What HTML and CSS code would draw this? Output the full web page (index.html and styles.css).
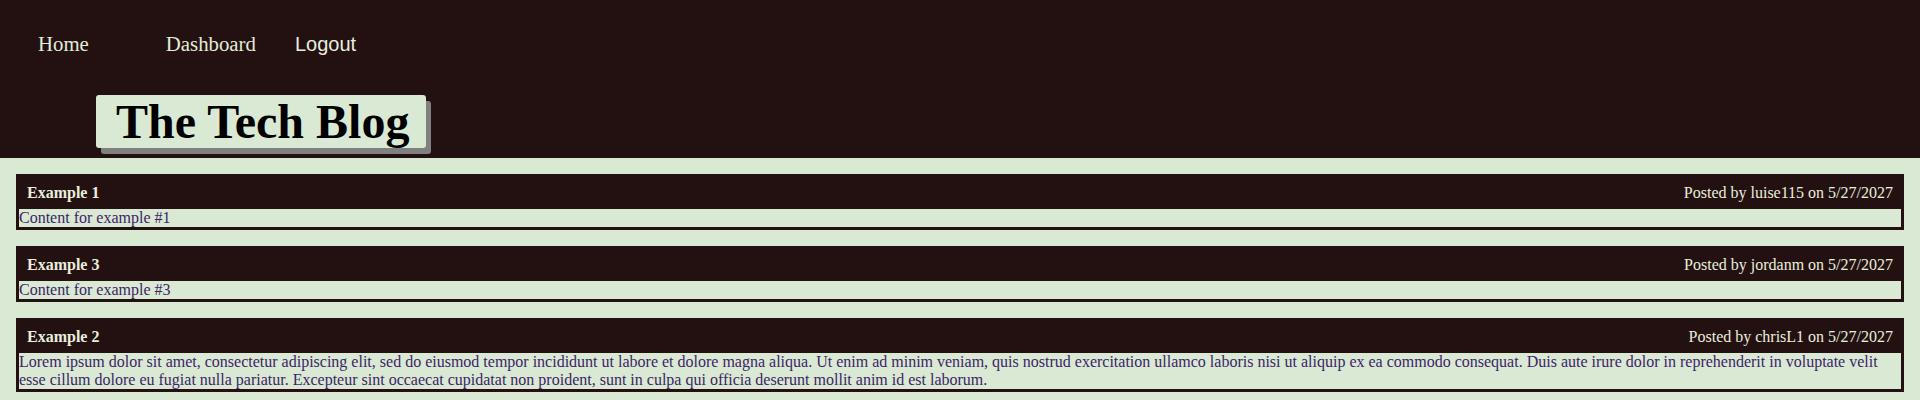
FILE: index.html
```html
<!DOCTYPE html>
<html lang="en">
<head>
<meta charset="utf-8">
<title>The Tech Blog</title>
<link rel="stylesheet" href="styles.css">
</head>
<body>
<header class="site-header">
  <nav class="nav">
    <a class="nav-link nav-home" href="#">Home</a>
    <a class="nav-link nav-dash" href="#">Dashboard</a>
    <button class="nav-logout" type="button">Logout</button>
  </nav>
  <h1 class="brand">The Tech Blog</h1>
</header>
<main class="posts">
  <article class="post">
    <div class="post-head"><span class="post-title">Example 1</span><span class="post-meta">Posted by luise115 on 5/27/2027</span></div>
    <div class="post-body">Content for example #1</div>
  </article>
  <article class="post">
    <div class="post-head"><span class="post-title">Example 3</span><span class="post-meta">Posted by jordanm on 5/27/2027</span></div>
    <div class="post-body">Content for example #3</div>
  </article>
  <article class="post">
    <div class="post-head"><span class="post-title">Example 2</span><span class="post-meta">Posted by chrisL1 on 5/27/2027</span></div>
    <div class="post-body">Lorem ipsum dolor sit amet, consectetur adipiscing elit, sed do eiusmod tempor incididunt ut labore et dolore magna aliqua. Ut enim ad minim veniam, quis nostrud exercitation ullamco laboris nisi ut aliquip ex ea commodo consequat. Duis aute irure dolor in reprehenderit in voluptate velit esse cillum dolore eu fugiat nulla pariatur. Excepteur sint occaecat cupidatat non proident, sunt in culpa qui officia deserunt mollit anim id est laborum.</div>
  </article>
</main>
</body>
</html>
```

FILE: styles.css
```css
html, body {
  margin: 0;
  padding: 0;
}
body {
  background: #d9e9d3;
  font-family: "Liberation Serif", "Times New Roman", serif;
  font-size: 16px;
}
.site-header {
  background: #231112;
  padding: 32px 0 10px 0;
}
.nav {
  display: flex;
  align-items: baseline;
  padding-left: 38px;
  height: 24px;
}
.nav-link {
  color: #e2ecd6;
  text-decoration: none;
  font-family: "Liberation Serif", "Times New Roman", serif;
  font-size: 20.8px;
}
.nav-home {
  margin-right: 77px;
}
.nav-dash {
  margin-right: 39px;
}
.nav-logout {
  background: none;
  border: 0;
  padding: 0;
  color: #e8eedf;
  font-family: "Liberation Sans", Arial, sans-serif;
  font-size: 20px;
  cursor: pointer;
}
.brand {
  display: inline-block;
  margin: 39px 0 0 96px;
  padding: 0 17px 0 20px;
  background: #d9e9d3;
  color: #000;
  font-family: "Liberation Serif", "Times New Roman", serif;
  font-size: 48px;
  font-weight: bold;
  line-height: 53px;
  border-radius: 3px;
  box-shadow: 5px 6px 0 #808080;
}
.posts {
  padding: 16px 16px 8px 16px;
}
.post {
  border: 3px solid #231112;
  background: #231112;
  margin-bottom: 16px;
}
.post-head {
  display: flex;
  justify-content: space-between;
  padding: 7px 8px;
  line-height: 18px;
  color: #eaeedd;
}
.post-title {
  font-weight: bold;
}
.post-body {
  background: #d9e9d3;
  color: #3d2468;
  line-height: 18px;
}
```
